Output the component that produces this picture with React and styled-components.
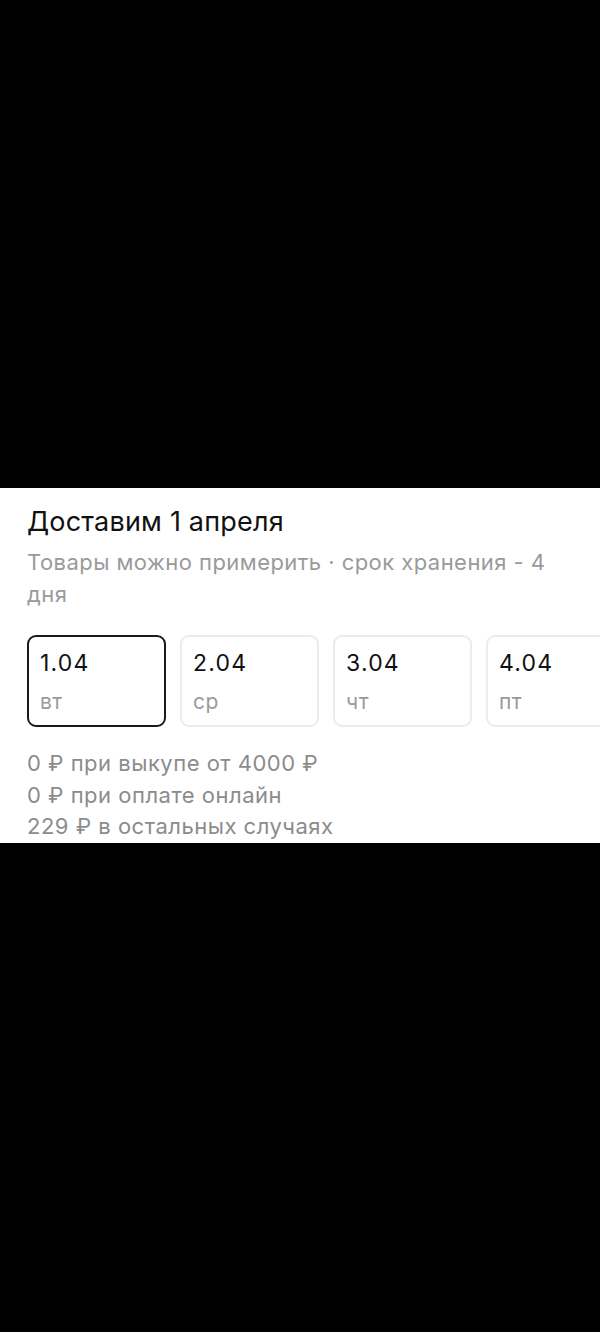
import React from 'react';
import styled, { createGlobalStyle } from 'styled-components';

const GlobalStyle = createGlobalStyle`
  html, body {
    margin: 0;
    padding: 0;
    background: #000;
  }
  body {
    font-family: Inter, "Noto Sans", sans-serif;
    -webkit-font-smoothing: antialiased;
  }
`;

const Screen = styled.div`
  min-height: 1332px;
  padding-top: 488px;
  box-sizing: border-box;
  background: #000;
`;

const Sheet = styled.section`
  background: #fff;
  padding: 16px 0 10px;
  height: 355px;
  box-sizing: border-box;
  overflow: hidden;
`;

const Title = styled.h2`
  margin: 0;
  padding: 0 27px;
  font-size: 27px;
  line-height: 36px;
  font-weight: 400;
  color: #111;
  letter-spacing: 0.2px;
`;

const Subtitle = styled.p`
  margin: 6px 0 0;
  padding: 0 27px;
  font-size: 22px;
  line-height: 32px;
  letter-spacing: 0.45px;
  color: #9a9a9a;
`;

const DaysRow = styled.div`
  display: flex;
  gap: 14px;
  padding: 0 27px;
  margin-top: 25px;
  overflow: hidden;
`;

const DayCard = styled.button`
  flex: 0 0 139px;
  height: 92px;
  box-sizing: border-box;
  display: flex;
  flex-direction: column;
  align-items: flex-start;
  padding: 11px 11px;
  background: #fff;
  border-radius: 9px;
  border: ${(p) => (p.$active ? '2px solid #1a1a1a' : '2px solid #ececec')};
  font-family: inherit;
  text-align: left;
  cursor: pointer;
`;

const DayDate = styled.span`
  font-size: 23px;
  line-height: 30px;
  letter-spacing: 1.2px;
  color: #111;
`;

const DayName = styled.span`
  margin-top: 10px;
  font-size: 21px;
  line-height: 28px;
  letter-spacing: 0.5px;
  color: #9a9a9a;
`;

const Prices = styled.div`
  margin-top: 21px;
  padding: 0 27px;
`;

const PriceLine = styled.div`
  font-size: 22px;
  line-height: 31.5px;
  letter-spacing: 0.5px;
  color: #8c8c8c;
`;

const days = [
  { date: '1.04', name: 'вт' },
  { date: '2.04', name: 'ср' },
  { date: '3.04', name: 'чт' },
  { date: '4.04', name: 'пт' },
  { date: '5.04', name: 'сб' },
];

const prices = [
  '0 ₽ при выкупе от 4000 ₽',
  '0 ₽ при оплате онлайн',
  '229 ₽ в остальных случаях',
];

export default function App() {
  return (
    <>
      <GlobalStyle />
      <Screen>
        <Sheet>
          <Title>Доставим 1 апреля</Title>
          <Subtitle>Товары можно примерить · срок хранения - 4 дня</Subtitle>
          <DaysRow>
            {days.map((d, i) => (
              <DayCard key={d.date} $active={i === 0}>
                <DayDate>{d.date}</DayDate>
                <DayName>{d.name}</DayName>
              </DayCard>
            ))}
          </DaysRow>
          <Prices>
            {prices.map((t) => (
              <PriceLine key={t}>{t}</PriceLine>
            ))}
          </Prices>
        </Sheet>
      </Screen>
    </>
  );
}
